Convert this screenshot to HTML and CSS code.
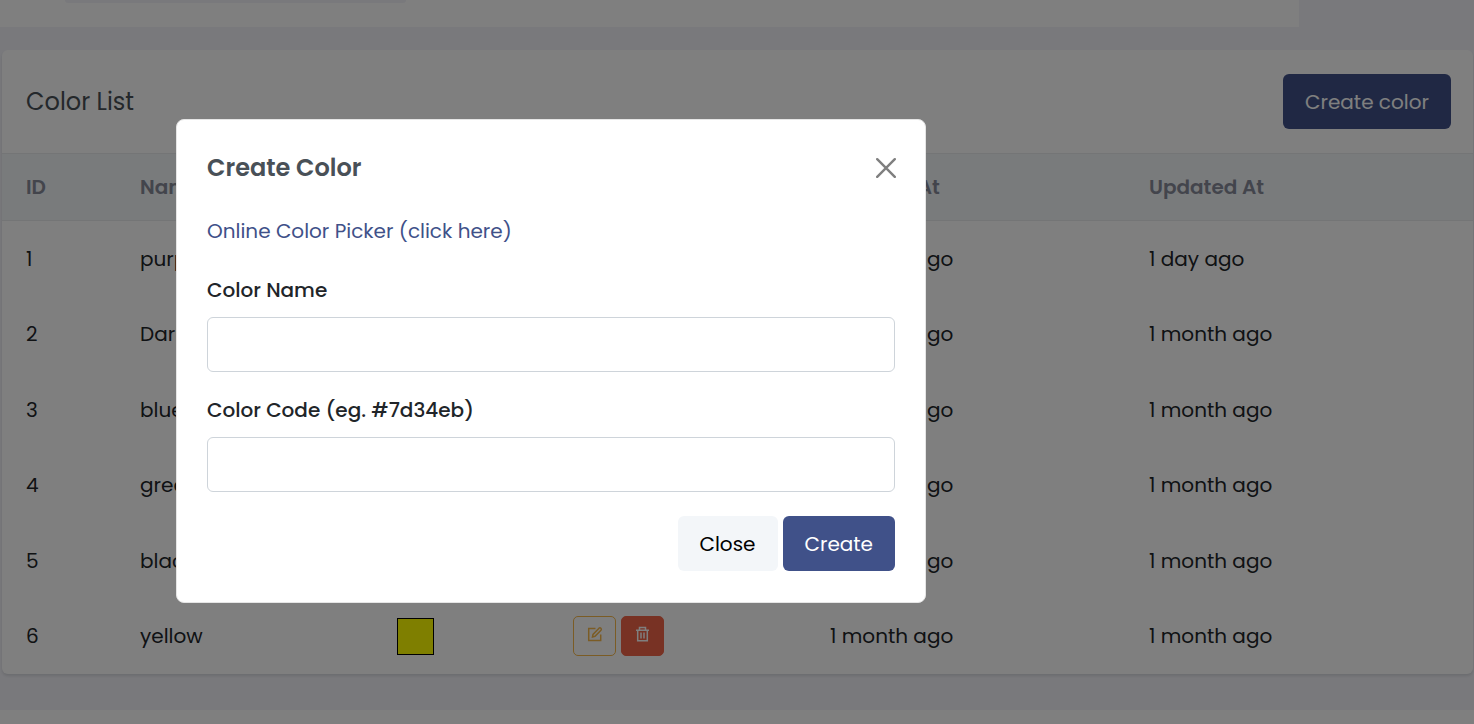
FILE: index.html
```html
<!DOCTYPE html>
<html lang="en">
<head>
<meta charset="utf-8">
<title>Color List</title>
<link rel="stylesheet" href="styles.css">
</head>
<body>
<svg class="sprite" aria-hidden="true">
  <symbol id="edit" viewBox="0 0 16 16">
    <path d="M8.500 2.500H1.700v12h12V8.500" fill="none" stroke="currentColor" stroke-width="1.500"/>
    <path d="M5.500 10.900 6 8.400l6-6.200q1-.8 1.900.1t.1 1.900L8 10.300Z" fill="none" stroke="currentColor" stroke-width="1.500"/>
  </symbol>
  <symbol id="trash" viewBox="0 0 16 16">
    <path d="M1 4.200h13M4.500 4V1.500h6V4M2.700 4.200v10.600h9.600V4.200M6 6.500v6M9 6.500v6" fill="none" stroke="currentColor" stroke-width="1.500"/>
  </symbol>
</svg>

<div class="page">
  <div class="filter-bar"><div class="filter-field"></div></div>
  <main class="card">
    <header class="card-header">
      <h1 class="card-title">Color List</h1>
      <button class="btn btn-primary" type="button">Create color</button>
    </header>
    <table class="colors">
      <colgroup><col class="c-id"><col class="c-name"><col class="c-color"><col class="c-action"><col class="c-created"><col></colgroup>
      <thead><tr><th>ID</th><th>Name</th><th>Color</th><th>Action</th><th>Created At</th><th>Updated At</th></tr></thead>
      <tbody>
        <tr><td>1</td><td>purple</td><td></td><td></td><td>1 month ago</td><td>1 day ago</td></tr>
        <tr><td>2</td><td>Dark</td><td></td><td></td><td>1 month ago</td><td>1 month ago</td></tr>
        <tr><td>3</td><td>blue</td><td></td><td></td><td>1 month ago</td><td>1 month ago</td></tr>
        <tr><td>4</td><td>green</td><td></td><td></td><td>1 month ago</td><td>1 month ago</td></tr>
        <tr><td>5</td><td>black</td><td></td><td></td><td>1 month ago</td><td>1 month ago</td></tr>
        <tr><td>6</td><td>yellow</td><td><div class="swatch"></div></td>
          <td><div class="actions">
            <button class="icon-btn edit" type="button" aria-label="Edit"><svg><use href="#edit"/></svg></button>
            <button class="icon-btn delete" type="button" aria-label="Delete"><svg><use href="#trash"/></svg></button>
          </div></td><td>1 month ago</td><td>1 month ago</td></tr>
      </tbody>
    </table>
  </main>
  <footer class="footer"></footer>
</div>

<div class="backdrop">
  <form class="modal" role="dialog" aria-labelledby="dialog-title">
    <div class="modal-header">
      <h2 class="modal-title" id="dialog-title">Create Color</h2>
      <button class="close" type="button" aria-label="Close dialog"><svg viewBox="0 0 20 20"><path d="M1.200 1.200l17.600 17.600M18.800 1.200 1.200 18.800" fill="none" stroke="currentColor" stroke-width="2.400" stroke-linecap="round"/></svg></button>
    </div>
    <a class="picker" href="#picker">Online Color Picker (click here)</a>
    <div class="field">
      <label for="name">Color Name</label>
      <input id="name" type="text">
    </div>
    <div class="field">
      <label for="code">Color Code (eg. #7d34eb)</label>
      <input id="code" type="text">
    </div>
    <div class="modal-actions">
      <button class="btn btn-light" type="button">Close</button>
      <button class="btn btn-primary" type="submit">Create</button>
    </div>
  </form>
</div>
</body>
</html>
```
FILE: styles.css
```css
* { box-sizing: border-box; }
body {
  margin: 0;
  background: #f3f3f9;
  color: #212529;
  font: 400 20px/30px Poppins, Inter, sans-serif;
  overflow: hidden;
}
button, input { font: inherit; }
.sprite { position: absolute; width: 0; height: 0; }
.page { display: flex; flex-direction: column; height: 100vh; }
.filter-bar { height: 27px; margin-right: 175px; padding-left: 65px; background: #fff; flex: none; }
.filter-field { width: 341px; height: 3px; background: #f3f3f9; border-radius: 0 0 5px 5px; }
.card {
  flex: none;
  margin: 23px 1px 36px 2px;
  background: #fff;
  border-radius: 6px;
  box-shadow: 0 2px 3px rgba(56, 65, 74, .15);
}
.card-header { display: flex; align-items: center; justify-content: space-between; padding: 24px 22px 24px 24px; }
.card-title { margin: 0; font-size: 24px; font-weight: 400; line-height: 30px; color: #495057; }
.btn { height: 55px; padding: 0 22px; border: 0; border-radius: 6px; }
.btn-primary { background: #405189; color: #fff; }
.btn-light { background: #f3f6f9; color: #000; }
.colors { width: 100%; height: 521px; border-collapse: separate; border-spacing: 0; table-layout: fixed; }
.c-id { width: 114px; }
.c-name { width: 257px; }
.c-color { width: 176px; }
.c-action { width: 257px; }
.c-created { width: 319px; }
th, td { padding: 0 0 0 24px; text-align: left; vertical-align: middle; }
tbody td { height: 75px; }
th { height: 68px; background: #f3f6f9; border: solid #e9ebec; border-width: 1px 0; color: #878a99; font-weight: 600; }
.swatch { width: 37px; height: 37px; background: #ff0; border: 1px solid #000; }
.actions { display: flex; gap: 5px; }
.icon-btn { display: grid; place-items: start center; width: 43px; height: 40px; padding: 9px 0 0; border: 1px solid; border-radius: 5px; }
.icon-btn svg { width: 16px; height: 16px; }
.edit { background: transparent; border-color: #f7b84b; color: #f7b84b; }
.delete { background: #f06548; border-color: #f06548; color: #fff; }
.footer { flex: 1; background: #fff; }

.backdrop { position: fixed; inset: 0; padding: 119px 24px 0 176px; background: rgba(0, 0, 0, .5); }
.modal { max-width: 750px; padding: 30px; background: #fff; border: 1px solid #e5e5e5; border-radius: 8px; }
.modal-header { display: flex; align-items: center; justify-content: space-between; height: 36px; }
.modal-title { margin: 0; font-size: 24px; font-weight: 600; line-height: 36px; color: #495057; }
.close { display: grid; width: 20px; height: 20px; margin-right: -1px; padding: 0; border: 0; background: none; color: #7f7f7f; }
.close svg { width: 20px; height: 20px; }
.picker { display: block; margin: 30px 0 29px; color: #405189; text-decoration: none; }
.field { margin-bottom: 23px; }
.field label { display: block; margin-bottom: 12px; font-weight: 500; }
.field input { display: block; width: 100%; height: 55px; padding: 0 20px; border: 1px solid #ced4da; border-radius: 6px; background: #fff; }
.modal-actions { display: flex; justify-content: flex-end; gap: 5px; padding: 1px 0; }
```
